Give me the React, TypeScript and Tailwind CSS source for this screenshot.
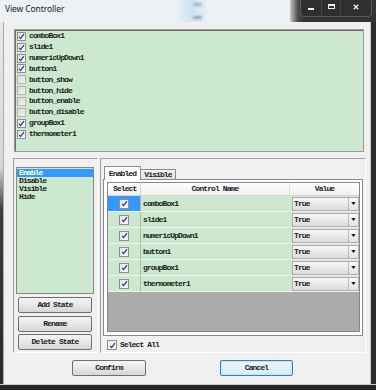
import React from 'react'

const controls: [string, boolean][] = [
  ['comboBox1', true],
  ['slide1', true],
  ['numericUpDown1', true],
  ['button1', true],
  ['button_show', false],
  ['button_hide', false],
  ['button_enable', false],
  ['button_disable', false],
  ['groupBox1', true],
  ['thermometer1', true],
]

const gridRows = ['comboBox1', 'slide1', 'numericUpDown1', 'button1', 'groupBox1', 'thermometer1']

const states = ['Enable', 'Disable', 'Visible', 'Hide']

function CheckBox({ checked, size = 'sm' }: { checked: boolean; size?: 'sm' | 'md' }) {
  return (
    <span
      className={
        size === 'md'
          ? 'flex h-[10px] w-[10px] shrink-0 items-center justify-center border border-[#8f8f8f] bg-gradient-to-br from-[#e4e4ec] to-white'
          : checked
            ? 'flex h-[9px] w-[9px] shrink-0 items-center justify-center border border-[#8f8f8f] bg-gradient-to-br from-[#dedede] to-white'
            : 'flex h-[9px] w-[9px] shrink-0 items-center justify-center border border-[#b4b4b4] bg-gradient-to-br from-[#d8d8d8] to-[#f2f2f2]'
      }
    >
      {checked && (
        <svg viewBox="0 0 8 8" className="h-[7px] w-[7px]">
          <path d="M1.3 4.3 L3 6.4 L6.8 1.2" fill="none" stroke="#2b3590" strokeWidth="1.4" />
        </svg>
      )}
    </span>
  )
}

function WinButton({ label, primary }: { label: string; primary?: boolean }) {
  return (
    <button
      className={
        primary
          ? 'flex h-[16px] w-[73px] items-center justify-center rounded-[2px] border border-[#3c7fb1] bg-gradient-to-b from-[#eaf6fd] to-[#d9eefb] shadow-[inset_0_0_0_1px_#c4e5f6]'
          : 'flex h-[16px] w-[74px] items-center justify-center rounded-[2px] border border-[#707070] bg-gradient-to-b from-[#f4f4f4] via-[#e8e8e8] to-[#d6d6d6]'
      }
    >
      {label}
    </button>
  )
}

function TitleBar() {
  return (
    <div className="flex h-[22px] shrink-0">
      <div className="flex w-[178px] items-center bg-[#eef1f4] pb-[3px] pl-[5px] font-['Noto_Sans',sans-serif] text-[8.5px] font-normal tracking-[-0.1px] text-[#1a1a1a]">
        View Controller
      </div>
      {/* blurred desktop behind the glass */}
      <div className="flex w-[28px] flex-col items-center justify-between bg-gradient-to-r from-[#e6eff8] via-[#cfe2f3] to-[#e3edf6] py-[3px] pl-[10px]">
        <div className="h-[3px] w-[9px] rounded-full bg-[#9fb2c6] blur-[1px]" />
        <div className="h-[3px] w-[9px] rounded-full bg-[#8fa4ba] blur-[1px]" />
      </div>
      <div className="w-[84px] bg-[#eef1f4]" />
      <div className="flex w-[86px] bg-[linear-gradient(to_right,#c9ccd0_0px,#4a4a4a_8px,#333333_14px)] pl-[10px]">
        <div className="flex h-[17px] w-[72px] rounded-b-[4px] border border-t-0 border-[#5a5a5a] bg-[#2f2f2f]">
          <div className="flex w-[20px] items-end justify-center pb-[6px]">
            <div className="h-[2px] w-[6px] bg-[#f0f0f0]" />
          </div>
          <div className="flex w-[20px] items-center justify-center border-x border-[#444] pb-[3px]">
            <div className="h-[5px] w-[7px] border border-t-2 border-[#f0f0f0]" />
          </div>
          <div className="flex flex-1 items-center justify-center pb-[3px]">
            <svg viewBox="0 0 8 8" className="h-[6px] w-[6px]">
              <path d="M1 1 L7 7 M7 1 L1 7" stroke="#f0f0f0" strokeWidth="1.8" />
            </svg>
          </div>
        </div>
      </div>
    </div>
  )
}

function StatePanel() {
  return (
    <div className="flex w-[85px] flex-col border border-b-white border-l-[#a0a0a0] border-r-white border-t-[#a0a0a0] pl-[2px] pt-[8px]">
      <div className="h-[127px] w-[78px] border border-[#828790] bg-[#cce8cf] pt-[1px]">
        {states.map((s, i) => (
          <div
            key={s}
            className={i === 0 ? 'flex h-[8px] items-center bg-[#3399ff] pl-[2px] text-white' : 'flex h-[8px] items-center pl-[2px]'}
          >
            {s}
          </div>
        ))}
      </div>
      <div className="ml-[2px] mt-[3px] flex flex-col gap-[2.5px]">
        <WinButton label="Add State" />
        <WinButton label="Rename" />
        <WinButton label="Delete State" />
      </div>
    </div>
  )
}

function ValueCombo() {
  return (
    <div className="flex h-[14px] w-[67px] border border-[#acacac] bg-gradient-to-b from-[#f6f6f6] to-[#dcdcdc]">
      <div className="flex flex-1 items-center pl-[1px]">True</div>
      <div className="flex w-[10px] items-center justify-center border-l border-[#b8b8b8] bg-gradient-to-b from-[#fafafa] to-[#e2e2e2]">
        <svg viewBox="0 0 6 4" className="h-[3px] w-[5px]">
          <path d="M0 0 H6 L3 4 Z" fill="#111" />
        </svg>
      </div>
    </div>
  )
}

function GridPanel() {
  return (
    <div className="flex w-[266px] flex-col border border-b-white border-l-[#a0a0a0] border-r-white border-t-[#a0a0a0] pl-[2px] pt-[7px]">
      <div className="-mb-[1px] flex h-[14px] items-end pl-[1px]">
        <div className="relative z-10 flex h-[14px] w-[37px] items-center justify-center border border-b-0 border-[#898c95] bg-white">
          Enabled
        </div>
        <div className="flex h-[11px] w-[35px] items-center justify-center border border-l-0 border-[#898c95] bg-gradient-to-b from-[#f4f4f4] to-[#e2e2e2]">
          Visible
        </div>
      </div>
      <div className="h-[157px] w-[260px] border border-[#898c95] bg-white pl-[3px] pt-[2px]">
        <div className="flex h-[150px] w-[253px] flex-col border border-[#828790] bg-[#ababab]">
          <div className="flex h-[13px] border-b border-[#d5d5d5] bg-gradient-to-b from-white to-[#f1f1f1]">
            <div className="flex w-[33px] items-center border-r border-[#d5d5d5] pl-[5px]">Select</div>
            <div className="flex w-[149px] items-center justify-center border-r border-[#e2e2e2]">Control Name</div>
            <div className="flex flex-1 items-center justify-center">Value</div>
          </div>
          {gridRows.map((name, i) => (
            <div key={name} className="flex h-[16px] border-b border-[#edf6ee] bg-[#cce8cf]">
              <div
                className={
                  i === 0
                    ? 'flex w-[33px] items-center justify-center border-r border-[#a9b9aa] bg-[#3399ff]'
                    : 'flex w-[33px] items-center justify-center border-r border-[#a9b9aa]'
                }
              >
                <CheckBox checked size="md" />
              </div>
              <div className="flex w-[149px] items-center pl-[2px]">{name}</div>
              <div className="flex flex-1 items-center pl-[2px]">
                <ValueCombo />
              </div>
            </div>
          ))}
        </div>
      </div>
      <div className="ml-[4px] mt-[3px] flex items-center gap-[3px]">
        <CheckBox checked size="md" />
        <span>Select All</span>
      </div>
    </div>
  )
}

function Client() {
  return (
    <div className="flex w-[366px] flex-col bg-[#f0f0f0] pt-[7px]">
      <div className="ml-[10px] h-[123px] w-[350px] border border-[#9a9a9a] bg-[#cce8cf] pl-[2px] pt-[1px] shadow-[inset_1px_1px_0_#6e6e6e]">
        {controls.map(([name, on]) => (
          <div key={name} className="flex h-[10.85px] items-center gap-[3px]">
            <CheckBox checked={on} />
            <span>{name}</span>
          </div>
        ))}
      </div>
      <div className="ml-[9px] mt-[6px] flex h-[195px] gap-[2px]">
        <StatePanel />
        <GridPanel />
      </div>
      <div className="ml-[68px] mt-[7px] flex gap-[74px]">
        <WinButton label="Confirm" />
        <WinButton label="Cancel" primary />
      </div>
    </div>
  )
}

export default function App() {
  return (
    <div className="flex h-[390px] w-[376px] flex-col overflow-hidden bg-[#2b2b2b] font-['Liberation_Mono',monospace] text-[8px] font-bold tracking-[-0.9px] text-[#1c1c1c]">
      <TitleBar />
      <div className="flex h-[362px]">
        <div className="w-[4px] border-r border-[#a8adb2] bg-[linear-gradient(to_bottom,#e6eaed_0%,#d3d7db_40%,#3c3c3c_52%,#2a2a2a_100%)]" />
        <Client />
        <div className="w-[6px] border-l border-[#cfcfcf] bg-[#2b2b2b]" />
      </div>
      <div className="h-[6px] border-t border-[#cfcfcf] bg-[#252525]" />
    </div>
  )
}
